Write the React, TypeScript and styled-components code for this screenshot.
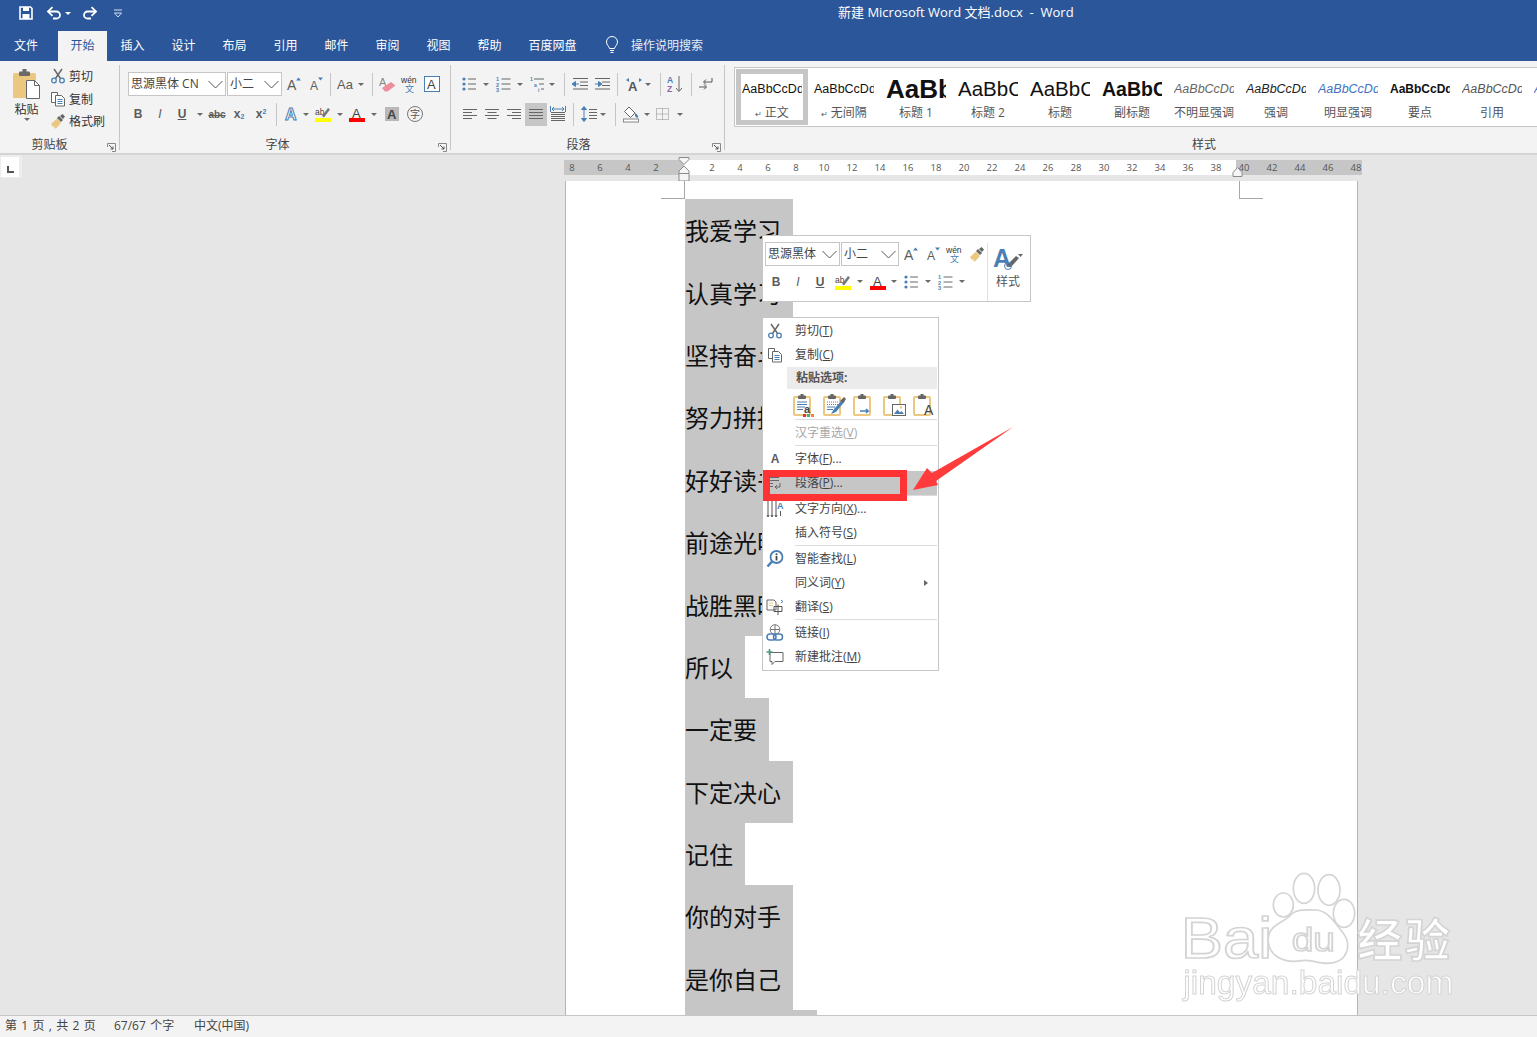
import React, { ReactNode } from 'react'
import styled, { createGlobalStyle } from 'styled-components'

const UI_FONT = `"Open Sans", "Noto Sans CJK SC", sans-serif`
const GRAY = '#5c5c5c'
const BLUE = '#4a7fb5'
const TAN = '#ecc780'
const LINE = '#c6c6c6'

const GlobalStyle = createGlobalStyle`
    html, body { margin: 0; padding: 0; background: #e6e6e6; }
    * { box-sizing: border-box; }
`

const Root = styled.div`
    position: relative;
    width: 1537px;
    height: 1037px;
    overflow: hidden;
    display: flex;
    flex-direction: column;
    font-family: ${UI_FONT};
    font-size: 12px;
    color: #444;
`

/* title bar and tabs */
const Header = styled.header`
    background: #2b579a;
    height: 61px;
    flex: none;
`
const TitleRow = styled.div`
    height: 31px;
    display: flex;
    align-items: center;
    padding-bottom: 5px;
`
const QuickTool = styled.span<{ $w: number }>`
    width: ${({ $w }) => $w}px;
    display: flex;
    justify-content: center;
    align-items: center;
`
const TitleText = styled.div`
    margin-left: 708px;
    margin-top: -4px;
    color: #fff;
    font-size: 13px;
    white-space: pre;
`
const TabRow = styled.nav`
    height: 30px;
    display: flex;
    align-items: stretch;
`
const Tab = styled.div<{ $active?: boolean; $w?: number; $mr?: number }>`
    width: ${({ $w }) => $w ?? 51}px;
    margin-right: ${({ $mr }) => $mr ?? 0}px;
    padding-bottom: 2px;
    display: flex;
    align-items: center;
    justify-content: center;
    font-size: 12px;
    color: ${({ $active }) => ($active ? '#2b579a' : '#fff')};
    background: ${({ $active }) => ($active ? '#f3f3f3' : 'transparent')};
`
const SearchHint = styled.div`
    display: flex;
    align-items: center;
    margin-left: 15px;
    padding-bottom: 2px;
    color: #e8edf5;
    gap: 12px;
`

/* ribbon */
const Ribbon = styled.section`
    height: 94px;
    flex: none;
    display: flex;
    background: #f3f3f3;
    border-bottom: 2px solid #d4d4d4;
    padding-top: 4px;
`
const Group = styled.div<{ $w?: number }>`
    width: ${({ $w }) => ($w ? `${$w}px` : 'auto')};
    flex: ${({ $w }) => ($w ? 'none' : '1')};
    min-width: 0;
    height: 85px;
    display: flex;
    flex-direction: column;
    border-right: ${({ $w }) => ($w ? `1px solid ${LINE}` : 'none')};
`
const GroupBody = styled.div`
    height: 70px;
    flex: none;
`
const GroupFooter = styled.div`
    position: relative;
    flex: 1;
    display: flex;
    justify-content: center;
    align-items: center;
    color: #444;
    font-size: 12px;
`
const GroupLabel = styled.span<{ $shift?: number }>`
    margin-left: ${({ $shift }) => $shift ?? 0}px;
`
const Launcher = styled.span`
    position: absolute;
    right: 3px;
    top: 4px;
    width: 9px;
    height: 9px;
`
const ClipBody = styled(GroupBody)`
    display: flex;
`
const PasteButton = styled.div`
    width: 37px;
    margin-left: 8px;
    display: flex;
    flex-direction: column;
    align-items: center;
    padding-top: 4px;
    font-size: 12px;
`
const PasteLabel = styled.span`
    line-height: 16px;
    margin-top: 1px;
    color: #333;
`
const ClipColumn = styled.div`
    margin-left: 5px;
    display: flex;
    flex-direction: column;
`
const ClipRow = styled.div`
    height: 22.5px;
    display: flex;
    align-items: center;
    gap: 3px;
    color: #333;
`
const ToolRows = styled(GroupBody)`
    display: flex;
    flex-direction: column;
    gap: 6px;
    padding-top: 7px;
`
const ToolRow = styled.div<{ $pl: number; $h?: number }>`
    display: flex;
    align-items: center;
    height: ${({ $h }) => $h ?? 24}px;
    padding-left: ${({ $pl }) => $pl}px;
`
const Combo = styled.div<{ $w: number; $h?: number; $ml?: number; $size?: number }>`
    width: ${({ $w }) => $w}px;
    height: ${({ $h }) => $h ?? 24}px;
    margin-left: ${({ $ml }) => $ml ?? 0}px;
    flex: none;
    background: #fff;
    border: 1px solid ${LINE};
    display: flex;
    align-items: center;
    justify-content: space-between;
    padding: 0 1px 2px 2px;
    font-size: ${({ $size }) => $size ?? 12}px;
    color: #444;
    white-space: nowrap;
`
const Tool = styled.span<{ $w?: number; $on?: boolean }>`
    width: ${({ $w }) => $w ?? 22}px;
    height: 23px;
    flex: none;
    display: flex;
    align-items: center;
    justify-content: center;
    background: ${({ $on }) => ($on ? LINE : 'transparent')};
`
const LetterTool = styled(Tool)<{ $bold?: boolean; $italic?: boolean; $under?: boolean; $size?: number; $strike?: boolean }>`
    font-family: "Liberation Sans", sans-serif;
    font-weight: ${({ $bold }) => ($bold ? 700 : 400)};
    font-style: ${({ $italic }) => ($italic ? 'italic' : 'normal')};
    text-decoration: ${({ $under, $strike }) => ($under ? 'underline' : $strike ? 'line-through' : 'none')};
    font-size: ${({ $size }) => $size ?? 12}px;
    color: ${GRAY};
`
const Sub = styled.span`
    font-size: 7px;
    color: ${BLUE};
    align-self: flex-end;
    margin-bottom: 6px;
`
const Sup = styled(Sub)`
    align-self: flex-start;
    margin: 5px 0 0;
`
const CaretSlot = styled.span<{ $w?: number }>`
    width: ${({ $w }) => $w ?? 12}px;
    flex: none;
    display: flex;
    justify-content: center;
`
const CaretMark = styled.i<{ $color?: string }>`
    display: block;
    width: 0;
    height: 0;
    border-left: 3px solid transparent;
    border-right: 3px solid transparent;
    border-top: 3px solid ${({ $color }) => $color ?? '#6a6a6a'};
`
const Sep = styled.span<{ $l?: number; $r?: number }>`
    width: 1px;
    height: 23px;
    flex: none;
    background: ${LINE};
    margin-left: ${({ $l }) => $l ?? 0}px;
    margin-right: ${({ $r }) => $r ?? 0}px;
`

/* styles gallery */
const StylesBody = styled(GroupBody)`
    padding: 2px 0 0 9px;
`
const Gallery = styled.div`
    height: 60px;
    background: #fff;
    border: 1px solid ${LINE};
    border-right: none;
    padding: 1px 0 1px 1px;
    display: flex;
    overflow: hidden;
`
const StyleItem = styled.div<{ $on?: boolean }>`
    width: 72px;
    height: 56px;
    flex: none;
    padding: 3px 6px 0;
    box-shadow: ${({ $on }) => ($on ? `inset 0 0 0 5px ${LINE}` : 'none')};
`
const StylePreview = styled.div<{ $size: number; $bold?: boolean; $italic?: boolean; $color?: string }>`
    height: 34px;
    line-height: 34px;
    overflow: hidden;
    white-space: nowrap;
    font-family: "Liberation Sans", sans-serif;
    font-size: ${({ $size }) => $size}px;
    font-weight: ${({ $bold }) => ($bold ? 700 : 400)};
    font-style: ${({ $italic }) => ($italic ? 'italic' : 'normal')};
    color: ${({ $color }) => $color ?? '#111'};
    text-align: left;
`
const StyleLabel = styled.div`
    height: 16px;
    line-height: 16px;
    margin-top: -1px;
    text-align: center;
    white-space: nowrap;
    color: #555;
    font-size: 12px;
`
const ReturnMark = styled.span`
    font-family: "DejaVu Sans", sans-serif;
    font-size: 8px;
    margin-right: 3px;
`

/* ruler and page */
const Workspace = styled.main`
    flex: 1;
    min-height: 0;
    overflow: hidden;
    background: #e6e6e6;
`
const RulerRow = styled.div`
    height: 26px;
    display: flex;
    align-items: flex-start;
`
const TabStop = styled.div`
    width: 22px;
    height: 23px;
    flex: none;
    background: #ededed;
    padding: 2px 3px 1px 1px;
`
const TabStopInner = styled.div`
    height: 100%;
    background: #fff;
    position: relative;
    &::after {
        content: '';
        position: absolute;
        left: 6px;
        top: 9px;
        width: 5px;
        height: 5px;
        border-left: 2px solid #555;
        border-bottom: 2px solid #555;
    }
`
const Ruler = styled.div`
    position: relative;
    margin: 5px 0 0 542px;
    height: 15px;
    width: 798px;
    display: flex;
`
const RulerPart = styled.div<{ $w: number; $white?: boolean; $align: string; $pad?: number }>`
    width: ${({ $w }) => $w}px;
    height: 15px;
    flex: none;
    display: flex;
    justify-content: ${({ $align }) => $align};
    padding: 0 ${({ $pad }) => $pad ?? 0}px;
    background: ${({ $white }) => ($white ? '#fff' : LINE)};
`
const RulerTick = styled.span<{ $ml?: number }>`
    width: 28px;
    flex: none;
    margin-left: ${({ $ml }) => $ml ?? 0}px;
    text-align: center;
    line-height: 15px;
    font-size: 9.5px;
    color: #555;
`
const RulerMarker = styled.svg<{ $x: number; $y: number }>`
    position: absolute;
    left: ${({ $x }) => $x}px;
    top: ${({ $y }) => $y}px;
`
const Page = styled.article`
    position: relative;
    margin-left: 565px;
    width: 793px;
    background: #fff;
    border-left: 1px solid #b4b4b4;
    border-right: 1px solid #b4b4b4;
    padding: 18px 0 0 119px;
`
const CropMark = styled.span<{ $right?: boolean }>`
    position: absolute;
    top: 0;
    left: ${({ $right }) => ($right ? 673 : 95)}px;
    width: 24px;
    height: 18px;
    border-bottom: 1px solid #a8a8a8;
    ${({ $right }) => ($right ? 'border-left' : 'border-right')}: 1px solid #a8a8a8;
`
const DocLine = styled.div<{ $w: number }>`
    width: ${({ $w }) => $w}px;
    height: 62.4px;
    padding-bottom: 1px;
    display: flex;
    align-items: center;
    background: ${LINE};
    font-family: "Noto Sans CJK SC", sans-serif;
    font-size: 24px;
    color: #111;
    white-space: nowrap;
`

/* status bar */
const StatusBar = styled.footer`
    height: 22px;
    flex: none;
    display: flex;
    align-items: center;
    padding: 0 0 3px 5px;
    background: #f3f3f3;
    border-top: 1px solid ${LINE};
    font-size: 12px;
    color: #444;
`
const StatusItem = styled.span<{ $w: number }>`
    width: ${({ $w }) => $w}px;
    flex: none;
    white-space: pre;
    word-spacing: 1.2px;
`

/* floating mini toolbar */
const MiniBar = styled.div`
    position: absolute;
    left: 762px;
    top: 235px;
    width: 269px;
    height: 67px;
    background: #fff;
    border: 1px solid ${LINE};
    display: flex;
    padding: 6px 0 0 2px;
`
const MiniRows = styled.div`
    width: 222px;
    flex: none;
    display: flex;
    flex-direction: column;
    gap: 4px;
`
const MiniRow = styled.div`
    display: flex;
    align-items: center;
`
const MiniSide = styled.div`
    margin-top: 1px;
    height: 58px;
    flex: 1;
    border-left: 1px solid #e0e0e0;
    display: flex;
    flex-direction: column;
    align-items: center;
    padding: 2px 2px 0 0;
    gap: 1px;
    color: #555;
`

/* context menu */
const Menu = styled.div`
    position: absolute;
    left: 762px;
    top: 317px;
    width: 177px;
    height: 354px;
    background: #fff;
    border: 1px solid ${LINE};
    padding: 1px 1px 0 0;
`
const MenuItem = styled.div<{ $on?: boolean; $off?: boolean }>`
    height: 24px;
    display: flex;
    align-items: center;
    background: ${({ $on }) => ($on ? LINE : 'transparent')};
    color: ${({ $off }) => ($off ? '#a8a8a8' : '#444')};
    font-size: 12px;
    white-space: nowrap;
`
const MenuIcon = styled.span`
    width: 24px;
    flex: none;
    display: flex;
    justify-content: center;
`
const MenuText = styled.span`
    margin: 0 0 2px 8px;
    flex: 1;
`
const SubArrow = styled.i`
    width: 0;
    height: 0;
    margin-right: 9px;
    border-top: 3.5px solid transparent;
    border-bottom: 3.5px solid transparent;
    border-left: 4px solid #666;
`
const MenuHeader = styled.div`
    height: 22px;
    margin-left: 24px;
    padding: 0 0 2px 9px;
    display: flex;
    align-items: center;
    background: #ebebeb;
    font-weight: 700;
    font-size: 12px;
    color: #555;
`
const PasteOptions = styled.div`
    height: 30px;
    display: flex;
    align-items: center;
    gap: 6px;
    padding: 2px 0 0 30px;
`
const MenuDivider = styled.div`
    height: 2px;
    margin-left: 32px;
    border-top: 1px solid #dcdcdc;
`

/* annotation laid over the shot */
const RedBox = styled.div`
    position: absolute;
    left: 763px;
    top: 470px;
    width: 144px;
    height: 31px;
    border: 7px solid #ff3333;
`
const Overlay = styled.svg<{ $x: number; $y: number; $blur?: boolean }>`
    position: absolute;
    left: ${({ $x }) => $x}px;
    top: ${({ $y }) => $y}px;
    pointer-events: none;
    filter: ${({ $blur }) => ($blur ? 'blur(.5px)' : 'none')};
`

const Ico = ({ s = 16, w, h, children }: { s?: number; w?: number; h?: number; children: ReactNode }) => (
    <svg width={w ?? s} height={h ?? s} viewBox={`0 0 ${w ?? s} ${h ?? s}`} style={{ display: 'block', overflow: 'visible' }}>{children}</svg>
)
const Caret = ({ w }: { w?: number }) => <CaretSlot $w={w}><CaretMark /></CaretSlot>
const Chevron = () => (
    <svg width="17" height="9" viewBox="0 0 17 9" style={{ marginTop: 2 }}><path d="M1.5 1l7 7 7-7" fill="none" stroke="#555" /></svg>
)
const LETTER = { fontFamily: 'Liberation Sans, sans-serif' }

const Save = () => (
    <Ico><path d="M2 2h10.500L14 3.500V14H2z" fill="none" stroke="#fff" strokeWidth="1.600" /><rect x="5" y="2" width="6" height="4" fill="#fff" /><rect x="4.500" y="9" width="7" height="5" fill="#fff" /></Ico>
)
const Undo = () => (
    <Ico><path d="M3 6.500h7.500a3.500 3.500 0 0 1 0 7H7" fill="none" stroke="#fff" strokeWidth="1.800" /><path d="M6.500 2.200L2 6.500l4.500 4.300" fill="none" stroke="#fff" strokeWidth="1.800" /></Ico>
)
const Redo = () => (
    <Ico><path d="M13 6.500H5.500a3.500 3.500 0 0 0 0 7H9" fill="none" stroke="#fff" strokeWidth="1.800" /><path d="M9.500 2.200L14 6.500l-4.500 4.300" fill="none" stroke="#fff" strokeWidth="1.800" /></Ico>
)
const QatMore = () => (
    <Ico w={10} h={9}><path d="M1 1h8" stroke="#d5deec" /><path d="M1.500 4h7L5 8z" fill="none" stroke="#d5deec" /></Ico>
)
const Bulb = () => (
    <Ico w={14} h={18}><path d="M4.500 12.500C4 10 1.500 9 1.500 6a5.500 5.500 0 0 1 11 0c0 3-2.500 4-3 6.500z" fill="none" stroke="#fff" /><path d="M5 14.500h4M5.500 16.500h3" stroke="#fff" /></Ico>
)
const PasteBig = () => (
    <Ico w={29} h={32}>
        <rect x="1" y="4" width="23" height="25" rx="1.500" fill={TAN} />
        <rect x="7" y="2.500" width="11" height="4.500" rx="1" fill="#6a6a6a" /><rect x="10.500" y="0" width="4" height="3" fill="#6a6a6a" />
        <path d="M14.500 11.500h8l5 5v13h-13z" fill="#fff" stroke="#666" />
        <path d="M22.500 11.500v5h5" fill="none" stroke="#666" />
    </Ico>
)
const Scissors = () => (
    <Ico>
        <path d="M4 1l6.500 9.500M12 1L5.500 10.500" stroke="#6a6a6a" strokeWidth="1.500" />
        <circle cx="4" cy="12.500" r="2.300" fill="none" stroke={BLUE} strokeWidth="1.300" /><circle cx="12" cy="12.500" r="2.300" fill="none" stroke={BLUE} strokeWidth="1.300" />
    </Ico>
)
const CopyIcon = () => (
    <Ico>
        <path d="M1.500 1.500h6v10h-6z" fill="#fff" stroke="#666" />
        <path d="M5.500 4.500h6l3 3v7.500h-9z" fill="#fff" stroke="#666" />
        <path d="M7.500 8.500h5M7.500 10.500h5M7.500 12.500h5" stroke={BLUE} />
    </Ico>
)
const Brush = () => (
    <Ico>
        <path d="M1 11l6-5.500 4 4.500-5 5.500-2-.5 1-2-2 1z" fill={TAN} />
        <path d="M7 5l2-2 4 4-2 2zM10 3l2.500-2 2.500 2.500-2 2.500z" fill="#666" />
    </Ico>
)
const Launch = () => (
    <Launcher>
        <svg width="9" height="9" viewBox="0 0 9 9"><path d="M.5 4V.5H8.500V8.500H5" fill="none" stroke="#888" /><path d="M2 2l4 4M6 3.500V6H3.500" fill="none" stroke="#555" /></svg>
    </Launcher>
)
const SizeA = ({ up }: { up?: boolean }) => (
    <Ico>
        <text x={up ? 1 : 2} y="14" fontSize={up ? 14 : 12} fill={GRAY} style={LETTER}>A</text>
        <path d={up ? 'M10 4.500h5L12.500 1.500z' : 'M10 1.500h5l-2.500 3z'} fill={BLUE} />
    </Ico>
)
const Eraser = () => (
    <Ico w={18} h={16}>
        <text x="0" y="10" fontSize="11" fill="#888" style={LETTER}>A</text>
        <path d="M3 12l9-6 4.500 3.500-8 6H6z" fill="#ee8d9b" />
    </Ico>
)
const Wen = () => (
    <Ico w={18} h={18}>
        <text x="0" y="8" fontSize="8.500" fill="#333" style={LETTER}>wén</text>
        <text x="4" y="17" fontSize="9" fill={BLUE} fontFamily="Noto Sans CJK SC">文</text>
    </Ico>
)
const BoxA = () => (
    <Ico>
        <rect x="0.500" y="0.500" width="15" height="15" fill="#fff" stroke={BLUE} />
        <text x="3" y="13" fontSize="13" fill="#444" style={LETTER}>A</text>
    </Ico>
)
const EffectA = () => (
    <Ico>
        <text x="1" y="14" fontSize="16" fontWeight="700" fill="#fff" stroke={BLUE} strokeWidth="1" style={LETTER}>A</text>
    </Ico>
)
const HighlightIcon = () => (
    <Ico>
        <text x="0" y="9" fontSize="8.500" fill="#444" style={LETTER}>ab</text>
        <path d="M7 10l6-8 2 1.500-6 8z" fill="#777" />
        <rect x="0" y="12" width="16" height="4" fill="#ffff00" />
    </Ico>
)
const ColorA = () => (
    <Ico>
        <text x="3" y="11.500" fontSize="13" fill="#444" style={LETTER}>A</text>
        <rect x="0" y="12" width="16" height="4" fill="#ff0000" />
    </Ico>
)
const ShadeA = () => (
    <Ico w={14} h={14}>
        <rect width="14" height="14" fill="#b8b8b8" />
        <text x="2" y="12" fontSize="13" fontWeight="700" fill="#444" style={LETTER}>A</text>
    </Ico>
)
const CircleChar = () => (
    <Ico>
        <circle cx="8" cy="8" r="7.500" fill="none" stroke="#777" />
        <text x="3" y="12" fontSize="10" fill="#555" fontFamily="Noto Sans CJK SC">字</text>
    </Ico>
)
const Bullets = () => (
    <Ico w={15} h={16}>
        <circle cx="2" cy="3" r="1.600" fill={BLUE} /><circle cx="2" cy="8" r="1.600" fill={BLUE} /><circle cx="2" cy="13" r="1.600" fill={BLUE} />
        <path d="M6 3h8M6 8h8M6 13h8" stroke="#666" />
    </Ico>
)
const Numbers = () => (
    <Ico w={15} h={16}>
        <g fill={BLUE} fontSize="5.500" fontWeight="700" style={LETTER}>
            <text x="0" y="5">1</text><text x="0" y="10.500">2</text><text x="0" y="15.500">3</text>
        </g>
        <path d="M5.500 3h9M5.500 8h9M5.500 13h9" stroke="#666" />
    </Ico>
)
const MultiLevel = () => (
    <Ico w={15} h={16}>
        <g fill={BLUE} fontSize="5" fontWeight="700" style={LETTER}>
            <text x="0" y="5">1</text><text x="4" y="10.500">a</text><text x="8" y="15.500">i</text>
        </g>
        <path d="M4 3h10M9 8h5M11 13h3" stroke="#666" />
    </Ico>
)
const Indent = ({ inc }: { inc?: boolean }) => (
    <Ico>
        <path d="M1 2.500h15M8 6h8M8 9.500h8M1 13h15" stroke="#666" />
        <path d={inc ? 'M1 8h3.500V5.500L8 8l-3.500 2.500V8' : 'M7 8H3.500V5.500L0 8l3.500 2.500V8'} fill={BLUE} stroke={BLUE} />
    </Ico>
)
const Direction = () => (
    <Ico w={18} h={16}>
        <text x="3" y="15" fontSize="13" fontWeight="700" fill="#555" style={LETTER}>A</text>
        <path d="M1 4l3-2v4zM17 4l-3-2v4z" fill={BLUE} />
    </Ico>
)
const Sort = () => (
    <Ico w={16} h={18}>
        <text x="0" y="8" fontSize="8.500" fontWeight="700" fill={BLUE} style={LETTER}>A</text>
        <text x="0" y="17" fontSize="8.500" fontWeight="700" fill="#8e62a8" style={LETTER}>Z</text>
        <path d="M12 1v15M9 13l3 3.500 3-3.500" fill="none" stroke="#666" />
    </Ico>
)
const Pilcrow = () => (
    <Ico>
        <path d="M14 2v4H6M8 3.500L5.500 6 8 8.500" fill="none" stroke="#555" />
        <path d="M1 11h7M6 8.500L8.500 11 6 13.500" fill="none" stroke="#555" />
    </Ico>
)
const Align = ({ kind }: { kind: 'left' | 'center' | 'right' | 'justify' }) => {
    const d = {
        left: 'M1 2.500h14M1 5.500h9M1 8.500h14M1 11.500h9',
        center: 'M1 2.500h14M3.500 5.500h9M1 8.500h14M3.500 11.500h9',
        right: 'M1 2.500h14M6 5.500h9M1 8.500h14M6 11.500h9',
        justify: 'M1 2.500h14M1 5.500h14M1 8.500h14M1 11.500h14',
    }[kind]
    return <Ico h={14}><path d={d} stroke="#666" /></Ico>
}
const Distribute = () => (
    <Ico>
        <path d="M.5 0v6M15.500 0v6M2 3h12M2 3l2-2M2 3l2 2M14 3l-2-2M14 3l-2 2" fill="none" stroke={BLUE} />
        <path d="M1 6.500h14M1 8.500h14M1 10.500h14M1 12.500h14M1 14.500h14" stroke="#666" />
    </Ico>
)
const LineSpacing = () => (
    <Ico w={16} h={18}>
        <path d="M3 2v14M.5 4.500L3 1.500l2.500 3zM.5 13.500L3 16.500l2.500-3z" fill={BLUE} stroke={BLUE} />
        <path d="M8 4.500h8M8 7.500h8M8 10.500h8M8 13.500h8" stroke="#666" />
    </Ico>
)
const Shading = () => (
    <Ico w={17} h={17}>
        <path d="M6 1l6 6-4.500 4.500-6-6z" fill="#fff" stroke="#666" />
        <path d="M12 7c2 1 3.500 3 3 4.500-1 1-2-.500-3-1.500z" fill={BLUE} />
        <rect x="0.500" y="13" width="15" height="3" fill="#fff" stroke="#888" />
    </Ico>
)
const Borders = () => (
    <Ico h={14}>
        <rect x="1.500" y="1.500" width="12" height="11" fill="none" stroke="#888" strokeDasharray="1 1" />
        <path d="M1.500 7h12M7.500 1.500v11" stroke="#888" strokeDasharray="1 1" />
    </Ico>
)
const StylesA = () => (
    <Ico w={30} h={26}>
        <text x="0" y="22" fontSize="25" fontWeight="700" fill={BLUE} style={LETTER}>A</text>
        <path d="M14 20l9-9 3 2-8 9z" fill="#666" />
        <circle cx="15" cy="21" r="3.500" fill="none" stroke={BLUE} />
        <path d="M25 9h5l-2.500 3z" fill="#666" />
    </Ico>
)

/* paste options share the same clipboard */
const Clip = ({ children }: { children?: ReactNode }) => (
    <Ico s={24}>
        <path d="M2 4h14a1 1 0 0 1 1 1v16a1 1 0 0 1-1 1H2a1 1 0 0 1-1-1V5a1 1 0 0 1 1-1z" fill="#fff" stroke={TAN} strokeWidth="2" />
        <rect x="5" y="2.500" width="8" height="3.500" rx="1" fill="#666" /><rect x="7.500" y="1" width="3" height="2" fill="#666" />
        {children}
    </Ico>
)
const PasteKeep = () => (
    <Clip>
        <path d="M4 9h10M4 11.500h10M4 14h8M4 16.500h6" stroke={BLUE} />
        <text x="11" y="20" fontSize="11" fontWeight="700" fill="#444" style={LETTER}>a</text>
        <rect x="10" y="21" width="3" height="3" fill="#d33" /><rect x="14" y="21" width="3" height="3" fill="#4a9" /><rect x="18" y="21" width="3" height="3" fill="#e83" />
    </Clip>
)
const PasteMerge = () => (
    <Clip>
        <path d="M4 9h11M4 11.500h11" stroke="#d55" strokeDasharray="1 1" /><path d="M4 14h8M4 16.500h6" stroke={BLUE} />
        <path d="M8 21l3-5 9-10 2 2-9 11z" fill={BLUE} /><path d="M17 8l4-4 2 2-3 4z" fill="#666" />
    </Clip>
)
const PastePicture = () => (
    <Clip>
        <rect x="9.500" y="11.500" width="13" height="11" fill="#fff" stroke="#666" />
        <path d="M11 21l3.500-4.500 2.500 3 1.500-1.500 2.500 3z" fill={BLUE} /><circle cx="18" cy="14.500" r="1.200" fill={TAN} />
    </Clip>
)
const MenuA = () => <LetterTool $w={16} $bold $size={12}>A</LetterTool>
const ParaIcon = () => (
    <Ico><path d="M1 2.500h11M1 5.500h11M1 8.500h5M1 11.500h5M13 8v4H8M10 10l-2 2 2 2" fill="none" stroke="#666" /></Ico>
)
const TextDir = () => (
    <Ico s={18}>
        <path d="M2 1v15M6 1v15M10 1v15" stroke="#555" />
        <path d="M1 15l1 2 1-2M5 15l1 2 1-2M9 15l1 2 1-2" fill="none" stroke="#555" />
        <text x="11" y="9" fontSize="9" fontWeight="700" fill={BLUE} style={LETTER}>A</text>
        <path d="M14.500 11v5" stroke="#555" />
    </Ico>
)
const SmartFind = () => (
    <Ico s={18}>
        <circle cx="10.500" cy="7" r="6" fill="#fff" stroke={BLUE} strokeWidth="1.800" />
        <path d="M6 11.500l-4.500 5" stroke={BLUE} strokeWidth="2.500" />
        <circle cx="10.500" cy="4.300" r="1" fill="#444" /><path d="M10.500 6v4.500" stroke="#444" strokeWidth="1.800" />
    </Ico>
)
const Translate = () => (
    <Ico s={18}>
        <path d="M1 2h7l2 2v8H1z" fill="#fff" stroke="#666" />
        <path d="M3 5h4M3 7.500h4" stroke={TAN} />
        <path d="M8 8.500h8v5H8zM12 6.500V17" fill="none" stroke="#555" />
        <path d="M15 2l2 1.500L15 5" fill="none" stroke={BLUE} />
    </Ico>
)
const LinkIcon = () => (
    <Ico s={18}>
        <circle cx="9" cy="5.500" r="4.800" fill="#fff" stroke="#777" />
        <path d="M4.500 5.500h9M9 1v9" stroke="#777" />
        <rect x="1" y="10" width="9" height="6" rx="3" fill="#fff" stroke={BLUE} strokeWidth="1.500" />
        <rect x="7.500" y="10" width="9" height="6" rx="3" fill="none" stroke={BLUE} strokeWidth="1.500" />
    </Ico>
)
const NewNote = () => (
    <Ico s={18}>
        <path d="M4 4.500h13v9H9l-3 3v-3H4z" fill="#fff" stroke="#666" />
        <path d="M3.500 1v6M.5 4h6" stroke="#4a9a7a" strokeWidth="1.600" />
    </Ico>
)

const rulerLeft = [8, 6, 4, 2]
const rulerMid = Array.from({ length: 19 }, (_, i) => (i + 1) * 2)
const rulerRight = [40, 42, 44, 46, 48]

const galleryItems = [
    { label: '无间隔', mark: true, text: 'AaBbCcDd', size: 12.5 },
    { label: '标题 1', text: 'AaBbC', size: 26, bold: true },
    { label: '标题 2', text: 'AaBbCc', size: 20.5 },
    { label: '标题', text: 'AaBbCc', size: 20.5 },
    { label: '副标题', text: 'AaBbCc', size: 19.5, bold: true },
    { label: '不明显强调', text: 'AaBbCcDd', size: 12.5, italic: true, color: '#666' },
    { label: '强调', text: 'AaBbCcDd', size: 12.5, italic: true, color: '#222' },
    { label: '明显强调', text: 'AaBbCcDd', size: 12.5, italic: true, color: '#4472c4' },
    { label: '要点', text: 'AaBbCcDd', size: 12, bold: true },
    { label: '引用', text: 'AaBbCcDd', size: 12.5, italic: true, color: '#555' },
    { label: '', text: 'AaBbCcDd', size: 12.5, italic: true, color: '#4472c4' },
]

const docLines = [
    ['我爱学习', 108], ['认真学习', 108], ['坚持奋斗', 108], ['努力拼搏', 108], ['好好读书', 108],
    ['前途光明', 108], ['战胜黑暗', 108], ['所以', 60], ['一定要', 84], ['下定决心', 108],
    ['记住', 60], ['你的对手', 108], ['是你自己', 108], ['', 132],
] as const

const App = () => (
    <>
        <GlobalStyle />
        <Root>
            <Header>
                <TitleRow>
                    <QuickTool $w={16} />
                    <QuickTool $w={20}><Save /></QuickTool>
                    <QuickTool $w={10} />
                    <QuickTool $w={16}><Undo /></QuickTool>
                    <QuickTool $w={12}><CaretMark $color="#fff" /></QuickTool>
                    <QuickTool $w={32}><Redo /></QuickTool>
                    <QuickTool $w={24}><QatMore /></QuickTool>
                    <TitleText>新建 Microsoft Word 文档.docx  -  Word</TitleText>
                </TitleRow>
                <TabRow>
                    <Tab $w={52} $mr={6}>文件</Tab>
                    <Tab $active $w={49}>开始</Tab>
                    {['插入', '设计', '布局', '引用', '邮件', '审阅', '视图', '帮助'].map(t => <Tab key={t}>{t}</Tab>)}
                    <Tab $w={75}>百度网盘</Tab>
                    <SearchHint><Bulb />操作说明搜索</SearchHint>
                </TabRow>
            </Header>

            <Ribbon>
                <Group $w={120}>
                    <ClipBody>
                        <PasteButton>
                            <PasteBig />
                            <PasteLabel>粘贴</PasteLabel>
                            <CaretMark />
                        </PasteButton>
                        <ClipColumn>
                            <ClipRow><Scissors />剪切</ClipRow>
                            <ClipRow><CopyIcon />复制</ClipRow>
                            <ClipRow><Brush />格式刷</ClipRow>
                        </ClipColumn>
                    </ClipBody>
                    <GroupFooter><GroupLabel $shift={-20}>剪贴板</GroupLabel><Launch /></GroupFooter>
                </Group>

                <Group $w={331}>
                    <ToolRows>
                        <ToolRow $pl={8}>
                            <Combo $w={98}>思源黑体 CN<Chevron /></Combo>
                            <Combo $w={55} $ml={1}>小二<Chevron /></Combo>
                            <Tool $w={23}><SizeA up /></Tool>
                            <Tool $w={22}><SizeA /></Tool>
                            <Sep $l={3} $r={3} />
                            <LetterTool $w={22} $size={13}>Aa</LetterTool>
                            <Caret w={10} />
                            <Sep $l={6} $r={4} />
                            <Tool><Eraser /></Tool>
                            <Tool><Wen /></Tool>
                            <Tool><BoxA /></Tool>
                        </ToolRow>
                        <ToolRow $pl={7}>
                            <LetterTool $bold>B</LetterTool>
                            <LetterTool $italic>I</LetterTool>
                            <LetterTool $under $bold>U</LetterTool>
                            <Caret w={13} />
                            <LetterTool $w={22} $size={10} $strike $bold>abc</LetterTool>
                            <LetterTool $bold>x<Sub>2</Sub></LetterTool>
                            <LetterTool $bold>x<Sup>2</Sup></LetterTool>
                            <Sep $l={4} $r={4} />
                            <Tool><EffectA /></Tool>
                            <Caret w={6} />
                            <Tool $w={28}><HighlightIcon /></Tool>
                            <Caret w={6} />
                            <Tool $w={28}><ColorA /></Tool>
                            <Caret w={6} />
                            <Tool $w={30}><ShadeA /></Tool>
                            <Tool $w={16}><CircleChar /></Tool>
                        </ToolRow>
                    </ToolRows>
                    <GroupFooter><GroupLabel $shift={-15}>字体</GroupLabel><Launch /></GroupFooter>
                </Group>

                <Group $w={274}>
                    <ToolRows>
                        <ToolRow $pl={7}>
                            <Tool><Bullets /></Tool><Caret />
                            <Tool><Numbers /></Tool><Caret />
                            <Tool><MultiLevel /></Tool><Caret w={8} />
                            <Sep $l={8} $r={4} />
                            <Tool><Indent /></Tool>
                            <Tool><Indent inc /></Tool>
                            <Sep $l={4} $r={5} />
                            <Tool><Direction /></Tool><Caret w={6} />
                            <Sep $l={9} $r={3} />
                            <Tool><Sort /></Tool>
                            <Sep $l={5} $r={3} />
                            <Tool><Pilcrow /></Tool>
                        </ToolRow>
                        <ToolRow $pl={7}>
                            <Tool $w={23}><Align kind="left" /></Tool>
                            <Tool><Align kind="center" /></Tool>
                            <Tool><Align kind="right" /></Tool>
                            <Tool $on><Align kind="justify" /></Tool>
                            <Tool><Distribute /></Tool>
                            <Sep $l={4} $r={4} />
                            <Tool><LineSpacing /></Tool><Caret w={6} />
                            <Sep $l={9} $r={4} />
                            <Tool><Shading /></Tool><Caret w={10} />
                            <Tool><Borders /></Tool><Caret />
                        </ToolRow>
                    </ToolRows>
                    <GroupFooter><GroupLabel $shift={-18}>段落</GroupLabel><Launch /></GroupFooter>
                </Group>

                <Group>
                    <StylesBody>
                        <Gallery>
                            <StyleItem $on>
                                <StylePreview $size={12.5}>AaBbCcDd</StylePreview>
                                <StyleLabel><ReturnMark>↵</ReturnMark>正文</StyleLabel>
                            </StyleItem>
                            {galleryItems.map((g, i) => (
                                <StyleItem key={i}>
                                    <StylePreview $size={g.size} $bold={g.bold} $italic={g.italic} $color={g.color}>{g.text}</StylePreview>
                                    <StyleLabel>{g.mark && <ReturnMark>↵</ReturnMark>}{g.label}</StyleLabel>
                                </StyleItem>
                            ))}
                        </Gallery>
                    </StylesBody>
                    <GroupFooter><GroupLabel $shift={146}>样式</GroupLabel></GroupFooter>
                </Group>
            </Ribbon>

            <Workspace>
                <RulerRow>
                    <TabStop><TabStopInner /></TabStop>
                    <Ruler>
                        <RulerPart $w={120} $align="flex-end" $pad={14}>
                            {rulerLeft.map(n => <RulerTick key={n}>{n}</RulerTick>)}
                        </RulerPart>
                        <RulerPart $w={552} $white $align="flex-start" $pad={14}>
                            {rulerMid.map(n => <RulerTick key={n}>{n}</RulerTick>)}
                        </RulerPart>
                        <RulerPart $w={126} $align="flex-start">
                            {rulerRight.map((n, i) => <RulerTick key={n} $ml={i === 0 ? -6 : 0}>{n}</RulerTick>)}
                        </RulerPart>
                        <RulerMarker $x={114} $y={-3} width="12" height="24" viewBox="0 0 12 24">
                            <path d="M1 .5h10v2L6 7.500 1 2.500z" fill="#f5f5f5" stroke="#8a8a8a" />
                            <path d="M6 9l5 5v2.500H1V14z" fill="#f5f5f5" stroke="#8a8a8a" />
                            <path d="M1 16.500h10v7.500H1z" fill="#f5f5f5" stroke="#8a8a8a" />
                        </RulerMarker>
                        <RulerMarker $x={668} $y={7} width="11" height="10" viewBox="0 0 11 10">
                            <path d="M1 9.500v-4L5.500.5 10 5.500v4z" fill="#f5f5f5" stroke="#8a8a8a" />
                        </RulerMarker>
                    </Ruler>
                </RulerRow>
                <Page>
                    <CropMark />
                    <CropMark $right />
                    {docLines.map(([text, w], i) => <DocLine key={i} $w={w}>{text}</DocLine>)}
                </Page>
            </Workspace>

            <StatusBar>
                <StatusItem $w={109}>第 1 页 , 共 2 页</StatusItem>
                <StatusItem $w={80}>67/67 个字</StatusItem>
                <StatusItem $w={80}>中文(中国)</StatusItem>
            </StatusBar>

            <Overlay $x={1160} $y={860} $blur width="310" height="150" viewBox="0 0 930 450">
                <g fill="#fff" stroke="#d4d4d4" strokeWidth="5">
                    <ellipse cx="432" cy="85" rx="32" ry="45" />
                    <ellipse cx="507" cy="90" rx="33" ry="46" />
                    <ellipse cx="370" cy="135" rx="30" ry="36" />
                    <ellipse cx="552" cy="160" rx="32" ry="42" />
                    <path d="M465 150c40 0 60 40 85 70 25 35 15 90-50 90-25 0-50-12-75-8-60 10-105-20-100-70 5-40 50-45 70-70 15-15 40-12 70-12z" />
                    <text x="395" y="272" fontSize="100" style={LETTER} textLength="130" lengthAdjust="spacingAndGlyphs">du</text>
                    <text x="62" y="295" fontSize="170" style={LETTER} textLength="275" lengthAdjust="spacingAndGlyphs">Bai</text>
                    <text x="592" y="290" fontSize="135" fontFamily="Noto Sans CJK SC" fontWeight="700" textLength="278">经验</text>
                    <text x="70" y="402" fontSize="100" style={LETTER} textLength="810" lengthAdjust="spacingAndGlyphs" strokeWidth="3">jingyan.baidu.com</text>
                </g>
            </Overlay>

            <MiniBar>
                <MiniRows>
                    <MiniRow>
                        <Combo $w={75} $h={24}>思源黑体<Chevron /></Combo>
                        <Combo $w={58} $h={24} $ml={1}>小二<Chevron /></Combo>
                        <Tool $w={24}><SizeA up /></Tool>
                        <Tool $w={20}><SizeA /></Tool>
                        <Tool $w={24}><Wen /></Tool>
                        <Tool $w={20}><Brush /></Tool>
                    </MiniRow>
                    <MiniRow>
                        <LetterTool $bold>B</LetterTool>
                        <LetterTool $italic>I</LetterTool>
                        <LetterTool $under $bold>U</LetterTool>
                        <Tool $w={24}><HighlightIcon /></Tool>
                        <Caret w={10} />
                        <Tool $w={26}><ColorA /></Tool>
                        <Caret w={6} />
                        <Tool $w={28}><Bullets /></Tool>
                        <Caret w={6} />
                        <Tool $w={28}><Numbers /></Tool>
                        <Caret w={6} />
                    </MiniRow>
                </MiniRows>
                <MiniSide><StylesA />样式</MiniSide>
            </MiniBar>

            <Menu>
                <MenuItem><MenuIcon><Scissors /></MenuIcon><MenuText>剪切(<u>T</u>)</MenuText></MenuItem>
                <MenuItem><MenuIcon><CopyIcon /></MenuIcon><MenuText>复制(<u>C</u>)</MenuText></MenuItem>
                <MenuHeader>粘贴选项:</MenuHeader>
                <PasteOptions>
                    <PasteKeep />
                    <PasteMerge />
                    <Clip><path d="M7 18h8l-2-2M15 18l-2 2" fill="none" stroke={BLUE} strokeWidth="1.600" /></Clip>
                    <PastePicture />
                    <Clip><text x="11" y="22" fontSize="14" fill="#444" style={LETTER}>A</text></Clip>
                </PasteOptions>
                <MenuDivider />
                <MenuItem $off><MenuIcon /><MenuText>汉字重选(<u>V</u>)</MenuText></MenuItem>
                <MenuDivider />
                <MenuItem><MenuIcon><MenuA /></MenuIcon><MenuText>字体(<u>F</u>)...</MenuText></MenuItem>
                <MenuItem $on><MenuIcon><ParaIcon /></MenuIcon><MenuText>段落(<u>P</u>)...</MenuText></MenuItem>
                <MenuDivider />
                <MenuItem><MenuIcon><TextDir /></MenuIcon><MenuText>文字方向(<u>X</u>)...</MenuText></MenuItem>
                <MenuItem><MenuIcon /><MenuText>插入符号(<u>S</u>)</MenuText></MenuItem>
                <MenuDivider />
                <MenuItem><MenuIcon><SmartFind /></MenuIcon><MenuText>智能查找(<u>L</u>)</MenuText></MenuItem>
                <MenuItem><MenuIcon /><MenuText>同义词(<u>Y</u>)</MenuText><SubArrow /></MenuItem>
                <MenuItem><MenuIcon><Translate /></MenuIcon><MenuText>翻译(<u>S</u>)</MenuText></MenuItem>
                <MenuDivider />
                <MenuItem><MenuIcon><LinkIcon /></MenuIcon><MenuText>链接(<u>I</u>)</MenuText></MenuItem>
                <MenuItem><MenuIcon><NewNote /></MenuIcon><MenuText>新建批注(<u>M</u>)</MenuText></MenuItem>
            </Menu>

            <RedBox />
            <Overlay $x={905} $y={420} width="115" height="80" viewBox="0 0 115 80">
                <path d="M108 7L27 53l-5-5L8 70l25-5-2-4z" fill="#ff3b3b" />
            </Overlay>
        </Root>
    </>
)

export default App
